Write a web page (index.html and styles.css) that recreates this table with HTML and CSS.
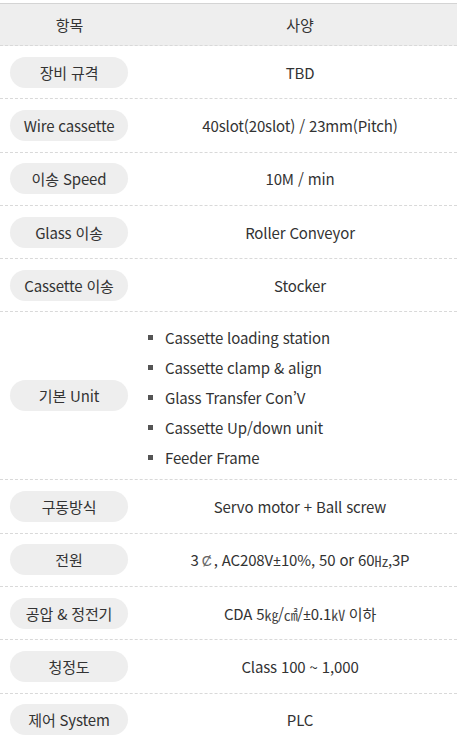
FILE: index.html
```html
<!DOCTYPE html>
<html lang="ko">
<head>
<meta charset="utf-8">
<link rel="stylesheet" href="styles.css">
</head>
<body>
<div class="spec">
  <div class="row head">
    <div class="hcell">항목</div>
    <div class="val">사양</div>
  </div>
  <div class="row">
    <div class="key"><span class="pill">장비 규격</span></div>
    <div class="val">TBD</div>
  </div>
  <div class="row">
    <div class="key"><span class="pill">Wire cassette</span></div>
    <div class="val">40slot(20slot) / 23mm(Pitch)</div>
  </div>
  <div class="row">
    <div class="key"><span class="pill">이송 Speed</span></div>
    <div class="val">10M / min</div>
  </div>
  <div class="row">
    <div class="key"><span class="pill">Glass 이송</span></div>
    <div class="val">Roller Conveyor</div>
  </div>
  <div class="row">
    <div class="key"><span class="pill">Cassette 이송</span></div>
    <div class="val">Stocker</div>
  </div>
  <div class="row tall">
    <div class="key"><span class="pill">기본 Unit</span></div>
    <ul class="units">
      <li>Cassette loading station</li>
      <li>Cassette clamp &amp; align</li>
      <li>Glass Transfer Con’V</li>
      <li>Cassette Up/down unit</li>
      <li>Feeder Frame</li>
    </ul>
  </div>
  <div class="row">
    <div class="key"><span class="pill">구동방식</span></div>
    <div class="val">Servo motor + Ball screw</div>
  </div>
  <div class="row">
    <div class="key"><span class="pill">전원</span></div>
    <div class="val">3<span class="phase">Ȼ</span>, AC208V<span class="pm">±</span>10%, 50 or 60<span class="unit">㎐</span>,3P</div>
  </div>
  <div class="row">
    <div class="key"><span class="pill">공압 &amp; 정전기</span></div>
    <div class="val">CDA 5<span class="unit">㎏</span>/<span class="unit">㎠</span>/<span class="pm">±</span>0.1<span class="unit">㎸</span> 이하</div>
  </div>
  <div class="row">
    <div class="key"><span class="pill">청정도</span></div>
    <div class="val">Class 100 ~ 1,000</div>
  </div>
  <div class="row">
    <div class="key"><span class="pill">제어 System</span></div>
    <div class="val">PLC</div>
  </div>
</div>
</body>
</html>
```
FILE: styles.css
```css
html, body {
  margin: 0;
  padding: 0;
  background: #fff;
}
body {
  font-family: "Noto Sans CJK KR", "Noto Sans", sans-serif;
  font-size: 15px;
  letter-spacing: -0.15px;
  color: #333;
  overflow: hidden;
}
.spec {
  margin-top: 3px;
}
.row {
  display: grid;
  grid-template-columns: 139px 1fr;
  align-items: center;
  box-sizing: border-box;
  height: 53.3px;
  border-bottom: 1px dashed #d9d9d9;
}
.head {
  height: 43px;
  background: #eeeeee;
  border-top: 1px solid #d4d4d4;
}
.hcell {
  text-align: center;
}
.val {
  text-align: center;
  padding-left: 4px;
  white-space: nowrap;
}
.key {
  padding-left: 10px;
}
.pill {
  display: flex;
  align-items: center;
  justify-content: center;
  width: 118px;
  height: 31px;
  border-radius: 16px;
  background: #eeeeee;
  white-space: nowrap;
}
.phase {
  font-family: "DejaVu Sans", sans-serif;
  font-weight: 200;
  color: #666;
  font-size: 14px;
  margin: 0 2px 0 3px;
}
.pm {
  font-family: "Noto Sans", sans-serif;
  font-size: 14px;
}
.unit {
  font-size: 14px;
  letter-spacing: -0.5px;
  color: #444;
}
.tall {
  height: auto;
}
.units {
  list-style: none;
  margin: 0;
  padding: 10px 0 7px 9px;
}
.units li {
  display: flex;
  align-items: center;
  gap: 12px;
  height: 30px;
}
.units li::before {
  content: "";
  width: 5px;
  height: 5px;
  background: #555;
  flex: none;
}
```
